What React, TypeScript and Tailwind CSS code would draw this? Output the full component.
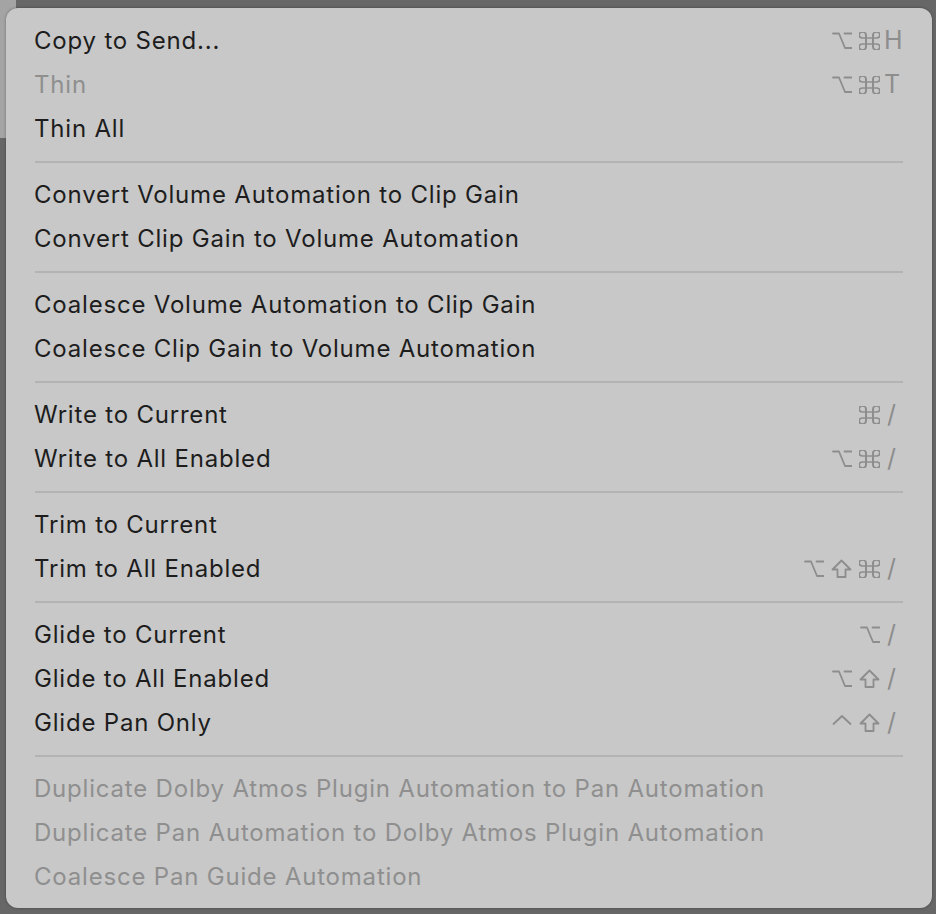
type Mod = 'opt' | 'cmd' | 'shift' | 'ctrl';

type Item = { label: string; disabled?: boolean; mods?: Mod[]; keyChar?: string };

const groups: Item[][] = [
  [
    { label: 'Copy to Send...', mods: ['opt', 'cmd'], keyChar: 'H' },
    { label: 'Thin', disabled: true, mods: ['opt', 'cmd'], keyChar: 'T' },
    { label: 'Thin All' },
  ],
  [{ label: 'Convert Volume Automation to Clip Gain' }, { label: 'Convert Clip Gain to Volume Automation' }],
  [{ label: 'Coalesce Volume Automation to Clip Gain' }, { label: 'Coalesce Clip Gain to Volume Automation' }],
  [
    { label: 'Write to Current', mods: ['cmd'], keyChar: '/' },
    { label: 'Write to All Enabled', mods: ['opt', 'cmd'], keyChar: '/' },
  ],
  [
    { label: 'Trim to Current' },
    { label: 'Trim to All Enabled', mods: ['opt', 'shift', 'cmd'], keyChar: '/' },
  ],
  [
    { label: 'Glide to Current', mods: ['opt'], keyChar: '/' },
    { label: 'Glide to All Enabled', mods: ['opt', 'shift'], keyChar: '/' },
    { label: 'Glide Pan Only', mods: ['ctrl', 'shift'], keyChar: '/' },
  ],
  [
    { label: 'Duplicate Dolby Atmos Plugin Automation to Pan Automation', disabled: true },
    { label: 'Duplicate Pan Automation to Dolby Atmos Plugin Automation', disabled: true },
    { label: 'Coalesce Pan Guide Automation', disabled: true },
  ],
];

function ModGlyph({ mod }: { mod: Mod }) {
  const common = {
    fill: 'none',
    stroke: '#8d8d8d',
    strokeWidth: 1.8,
    strokeLinecap: 'round' as const,
    strokeLinejoin: 'round' as const,
  };
  if (mod === 'opt') {
    return (
      <svg width="20" height="18" viewBox="0 0 20 18">
        <path d="M1 1.5 H7 L13 16 H19.5 M12.5 1.5 H19.5" {...common} />
      </svg>
    );
  }
  if (mod === 'cmd') {
    return (
      <svg width="21" height="18" viewBox="3 3 18 18" preserveAspectRatio="none">
        <path d="M15 6v12a3 3 0 1 0 3-3H6a3 3 0 1 0 3 3V6a3 3 0 1 0-3 3h12a3 3 0 1 0-3-3" {...common} strokeWidth={1.7} />
      </svg>
    );
  }
  if (mod === 'shift') {
    return (
      <svg width="21" height="20" viewBox="0 0 21 20">
        <path d="M10.5 1.5 L19.5 10.5 H14.5 V18 H6.5 V10.5 H1.5 Z" {...common} />
      </svg>
    );
  }
  return (
    <svg width="20" height="20" viewBox="0 0 20 20">
      <path d="M1.5 11 L10 3 L18.5 11" {...common} />
    </svg>
  );
}

function Row({ item }: { item: Item }) {
  return (
    <div className="flex h-[44px] items-center justify-between pl-[28px] pr-[25px]">
      <span className={item.disabled ? 'text-[#8f8f8f]' : 'text-[#1d1d1d]'}>{item.label}</span>
      {item.keyChar && (
        <div className="flex items-center">
          <div className="flex items-center gap-[7px]">
            {item.mods?.map((m, i) => <ModGlyph key={i} mod={m} />)}
          </div>
          <span className={`${item.keyChar === '/' ? 'ml-[7px] w-[20px]' : 'ml-[4px] w-[23px]'} text-left text-[25px] tracking-[2px] text-[#8d8d8d]`}>
            {item.keyChar}
          </span>
        </div>
      )}
    </div>
  );
}

export default function App() {
  return (
    <div className="relative h-[914px] w-[936px] overflow-hidden bg-[#676767]">
      <div className="absolute left-0 top-0 h-[138px] w-[16px] bg-[#a4a4a4]" />
      <div className="relative ml-[6px] mt-[8px] flex h-[900px] w-[926px] flex-col rounded-[12px] bg-[#c8c8c8] pb-[9px] pt-[11px] font-['Inter',sans-serif] text-[24px] tracking-[0.8px] shadow-[0_0_3px_rgba(0,0,0,0.35)]">
        {groups.map((g, gi) => (
          <div key={gi}>
            {gi > 0 && (
              <div className="flex h-[22px] items-center px-[29px]">
                <div className="h-[2px] w-full bg-[#b3b3b3]" />
              </div>
            )}
            {g.map((it) => (
              <Row key={it.label} item={it} />
            ))}
          </div>
        ))}
      </div>
    </div>
  );
}
